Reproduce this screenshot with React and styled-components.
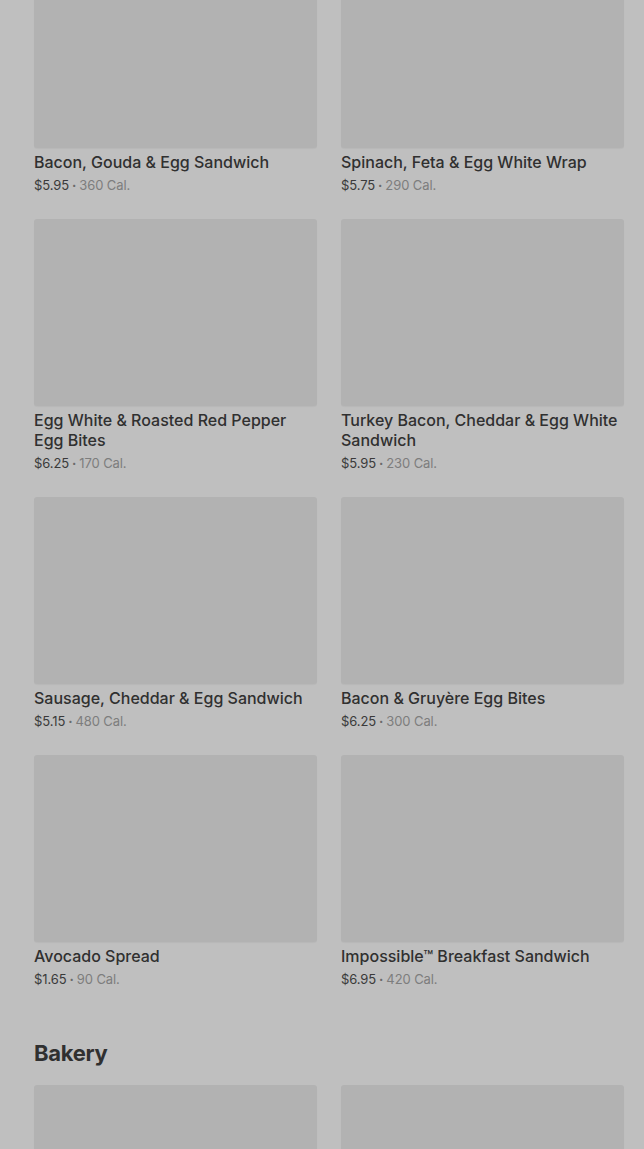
import React from 'react';
import styled, { createGlobalStyle } from 'styled-components';

const GlobalStyle = createGlobalStyle`
  html, body {
    margin: 0;
    padding: 0;
    background: #bfbfbf;
    overflow: hidden;
  }
  body {
    font-family: Inter, "Noto Sans", Roboto, sans-serif;
    -webkit-font-smoothing: antialiased;
  }
`;

const Page = styled.main`
  padding: 0 20px 0 34px;
  height: 1149px;
  overflow: hidden;
`;

const Scroller = styled.div`
  margin-top: -39px;
`;

const Section = styled.section`
  margin-bottom: 48px;
`;

const Heading = styled.h2`
  margin: 0 0 16px;
  font-size: 22px;
  line-height: 32px;
  font-weight: 700;
  letter-spacing: -0.3px;
  color: #303030;
`;

const Grid = styled.div`
  display: grid;
  grid-template-columns: 1fr 1fr;
  column-gap: 24px;
  row-gap: 24px;
`;

const Card = styled.a`
  display: flex;
  flex-direction: column;
  text-decoration: none;
  color: inherit;
`;

const Thumb = styled.div`
  height: 187px;
  background: #b2b2b2;
  border-radius: 3px;
  box-shadow: 0 1px 1px rgba(0, 0, 0, 0.04);
`;

const Title = styled.h3`
  margin: 4px 0 0;
  font-size: 16px;
  line-height: 20px;
  font-weight: 500;
  color: #303030;
  letter-spacing: 0;
`;

const Meta = styled.p`
  margin: 3px 0 0;
  font-size: 13px;
  line-height: 20px;
  color: #3a3a3a;
  letter-spacing: -0.1px;
`;

const Dot = styled.span`
  margin: 0 3px;
  font-weight: 700;
  color: #6a6a6a;
`;

const Cal = styled.span`
  color: #7d7d7d;
`;

const breakfast = [
  { name: 'Bacon, Gouda & Egg Sandwich', price: '$5.95', cal: 360 },
  { name: 'Spinach, Feta & Egg White Wrap', price: '$5.75', cal: 290 },
  { name: 'Egg White & Roasted Red Pepper Egg Bites', price: '$6.25', cal: 170 },
  { name: 'Turkey Bacon, Cheddar & Egg White Sandwich', price: '$5.95', cal: 230 },
  { name: 'Sausage, Cheddar & Egg Sandwich', price: '$5.15', cal: 480 },
  { name: 'Bacon & Gruyère Egg Bites', price: '$6.25', cal: 300 },
  { name: 'Avocado Spread', price: '$1.65', cal: 90 },
  { name: 'Impossible™ Breakfast Sandwich', price: '$6.95', cal: 420 },
];

const bakery = [
  { name: 'Butter Croissant', price: '$3.45', cal: 260 },
  { name: 'Chocolate Croissant', price: '$3.95', cal: 300 },
];

const Item = ({ item }) => (
  <Card href="#">
    <Thumb />
    <Title>{item.name}</Title>
    <Meta>
      {item.price}
      <Dot>·</Dot>
      <Cal>{item.cal} Cal.</Cal>
    </Meta>
  </Card>
);

export default function App() {
  return (
    <>
      <GlobalStyle />
      <Page>
        <Scroller>
          <Section>
            <Grid>
              {breakfast.map((item) => (
                <Item key={item.name} item={item} />
              ))}
            </Grid>
          </Section>
          <Section>
            <Heading>Bakery</Heading>
            <Grid>
              {bakery.map((item) => (
                <Item key={item.name} item={item} />
              ))}
            </Grid>
          </Section>
        </Scroller>
      </Page>
    </>
  );
}
